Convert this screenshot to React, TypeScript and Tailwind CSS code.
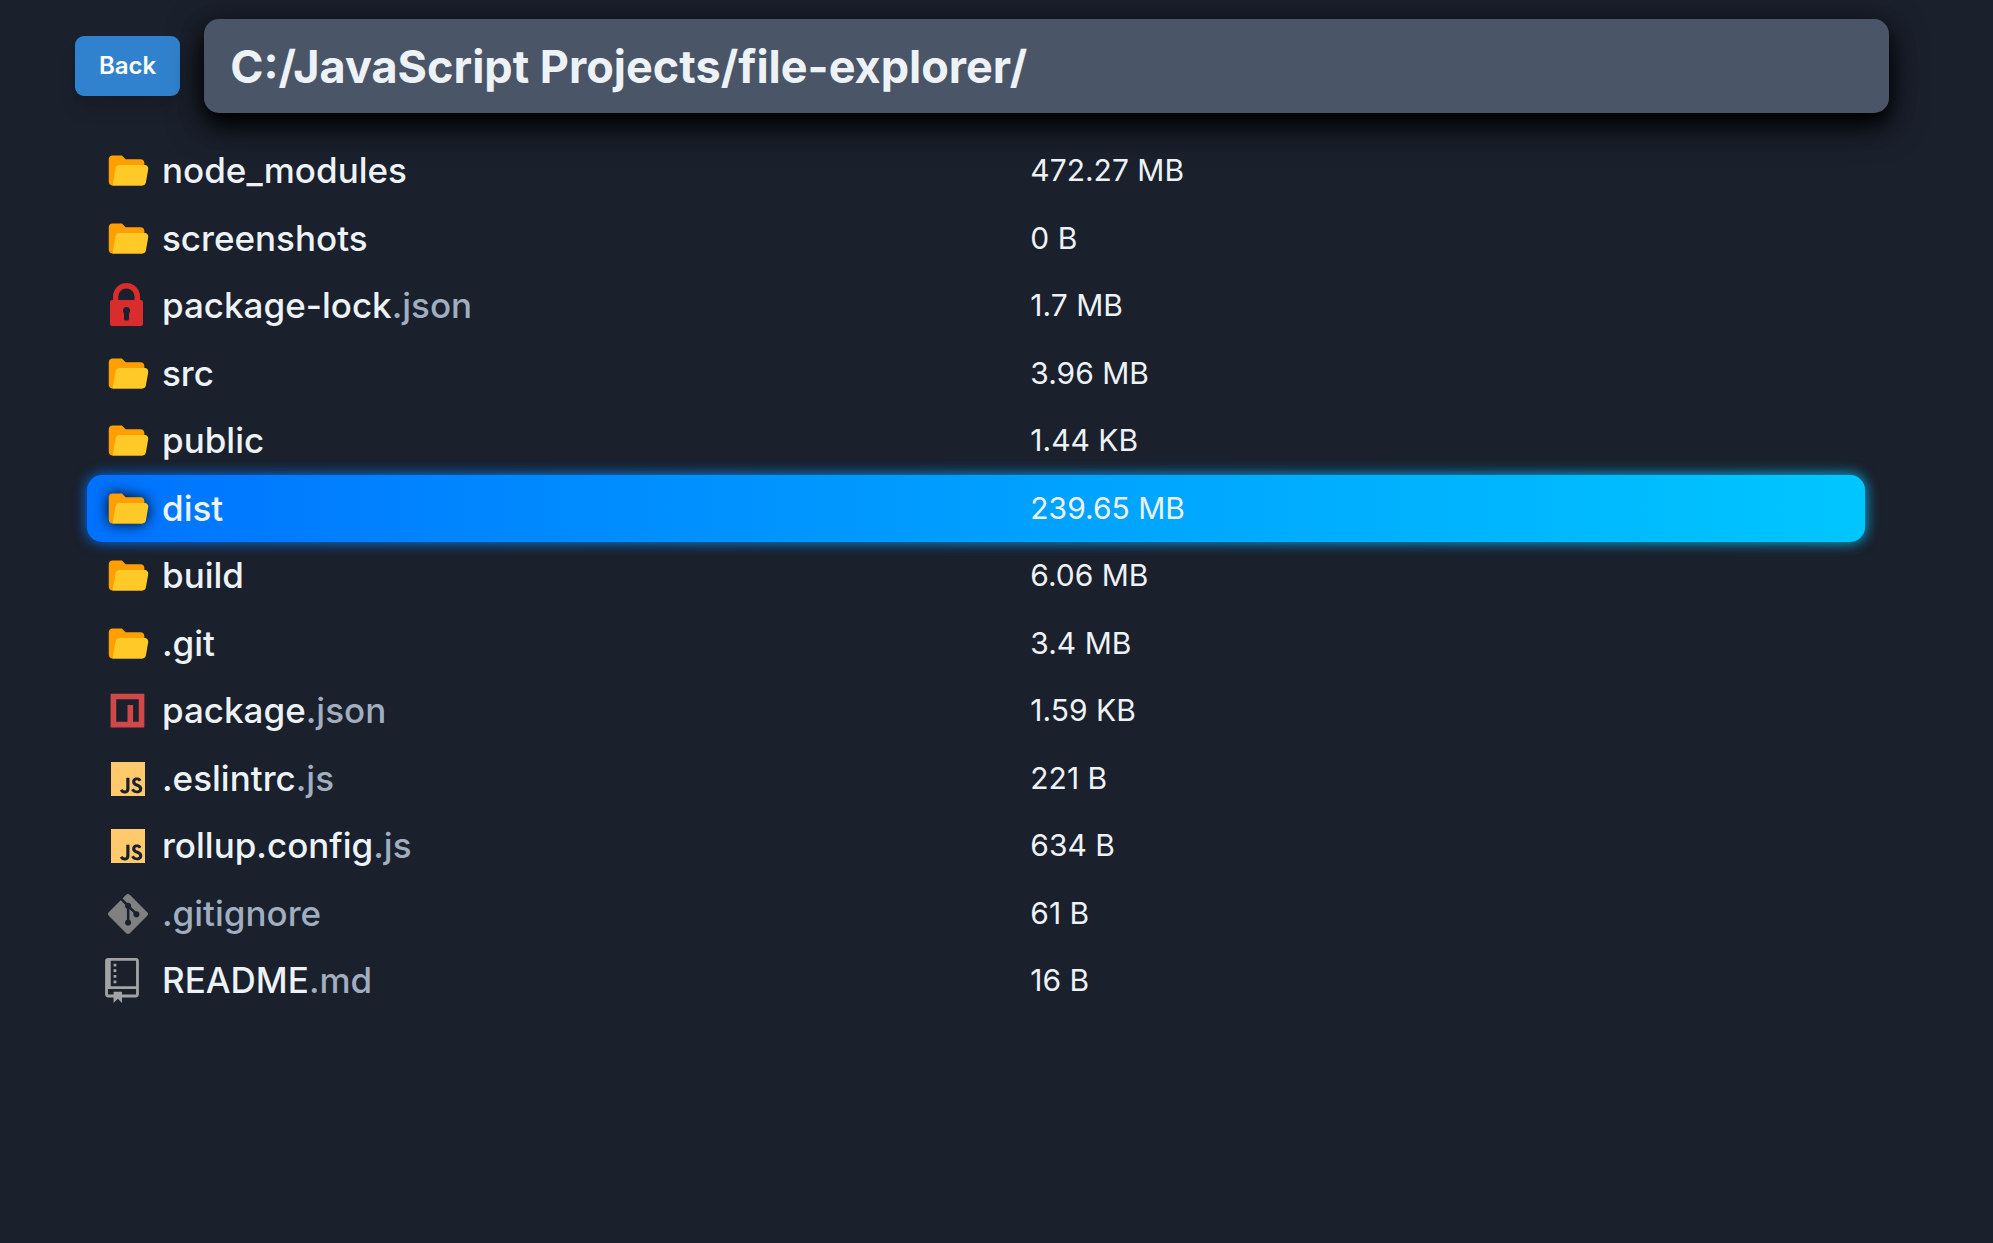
import type { ReactNode } from "react";
import { FcOpenedFolder } from "react-icons/fc";
import { SiGit, SiJavascript } from "react-icons/si";

type IconKind = "folder" | "lock" | "npm" | "js" | "git" | "readme";

type Entry = {
  icon: IconKind;
  name: string;
  ext?: string;
  size: string;
  selected?: boolean;
  muted?: boolean;
};

const entries: Entry[] = [
  { icon: "folder", name: "node_modules", size: "472.27 MB" },
  { icon: "folder", name: "screenshots", size: "0 B" },
  { icon: "lock", name: "package-lock", ext: ".json", size: "1.7 MB" },
  { icon: "folder", name: "src", size: "3.96 MB" },
  { icon: "folder", name: "public", size: "1.44 KB" },
  { icon: "folder", name: "dist", size: "239.65 MB", selected: true },
  { icon: "folder", name: "build", size: "6.06 MB" },
  { icon: "folder", name: ".git", size: "3.4 MB" },
  { icon: "npm", name: "package", ext: ".json", size: "1.59 KB" },
  { icon: "js", name: ".eslintrc", ext: ".js", size: "221 B" },
  { icon: "js", name: "rollup.config", ext: ".js", size: "634 B" },
  { icon: "git", name: ".gitignore", size: "61 B", muted: true },
  { icon: "readme", name: "README", ext: ".md", size: "16 B" },
];

function LockIcon() {
  return (
    <svg viewBox="-5 0 45 45" className="size-[45px]" aria-hidden="true">
      <path
        fill="#d92c2c"
        fillRule="evenodd"
        d="M3 17V13.5a13.5 13.5 0 0 1 27 0V17h1a2 2 0 0 1 2 2V41a2 2 0 0 1-2 2H2a2 2 0 0 1-2-2V19a2 2 0 0 1 2-2ZM8.300 17h16.200V13.500a8.100 8.100 0 0 0-16.200 0ZM16.500 24a3.700 3.700 0 0 0-2.500 6.400V36a1.500 1.500 0 0 0 1.500 1.500h2A1.500 1.500 0 0 0 19 36V30.400A3.700 3.700 0 0 0 16.500 24Z"
      />
    </svg>
  );
}

function NpmIcon() {
  return (
    <svg viewBox="0 0 24 24" className="size-[45px]" aria-hidden="true">
      <path fill="#d14848" d="M3 3H21V21H3V3M6 6V18H12V9H15V18H18V6H6Z" />
    </svg>
  );
}

function ReadmeIcon() {
  return (
    <svg viewBox="0 0 12 16" className="h-[45px] w-[34px]" aria-hidden="true">
      <path
        fill="#a3a3a3"
        fillRule="evenodd"
        d="M4 9H3V8h1v1zm0-3H3v1h1V6zm0-2H3v1h1V4zm0-2H3v1h1V2zm8-1v12c0 .55-.45 1-1 1H6v2l-1.5-1.5L3 16v-2H1c-.55 0-1-.45-1-1V1c0-.55.45-1 1-1h10c.55 0 1 .45 1 1zm-1 10H1v2h2v-1h3v1h5v-2zm0-10H2v9h9V1z"
      />
    </svg>
  );
}

const icons: Record<IconKind, ReactNode> = {
  folder: <FcOpenedFolder className="size-[45px]" aria-hidden="true" />,
  lock: <LockIcon />,
  npm: <NpmIcon />,
  js: <SiJavascript className="mx-auto size-[34px] text-[#ffca6b]" aria-hidden="true" />,
  git: <SiGit className="mx-auto size-10 text-[#808080]" aria-hidden="true" />,
  readme: <ReadmeIcon />,
};

const selectedRow =
  "bg-linear-to-r from-[#0072ff] to-[#00c6ff] before:absolute before:inset-0 before:-z-10 before:rounded-[15px] before:bg-linear-to-r before:from-[#0072ff] before:to-[#00c6ff] before:blur-[7px]";

function EntryRow({ entry }: { entry: Entry }) {
  return (
    <tr
      aria-selected={entry.selected ?? false}
      className={`relative grid grid-cols-[53fr_47fr] items-start rounded-[15px] py-[11px] odd:h-[68px] even:h-[67px] ${entry.selected ? selectedRow : ""}`}
    >
      <td className="flex items-center gap-3 pl-[18px] text-[35px] leading-[45px] font-medium">
        <span
          className={`flex h-[45px] w-[45px] shrink-0 items-center ${entry.selected ? "drop-shadow-[0_0_7px_#000000]" : ""}`}
        >
          {icons[entry.icon]}
        </span>
        <span className={entry.muted ? "text-[#a0aec0]" : ""}>
          {entry.name}
          {entry.ext && <span className="text-[#a0aec0]">{entry.ext}</span>}
        </span>
      </td>
      <td className="pl-px text-3xl leading-[45px]">{entry.size}</td>
    </tr>
  );
}

export default function App() {
  return (
    <div className="min-h-screen bg-[#1a202c] pt-[19px] font-['Inter',sans-serif] text-[#edf2f7]">
      <header className="flex items-center gap-6 pr-[104px] pl-[75px]">
        <button
          type="button"
          className="h-[60px] rounded-[9px] bg-[#3182ce] px-6 text-2xl font-semibold text-white shadow-[0_15px_22px_-4px_rgba(0,0,0,0.1),0_6px_9px_-3px_rgba(0,0,0,0.05)]"
        >
          Back
        </button>
        <h1 className="flex-1 rounded-[15px] bg-[#4a5568] px-[26px] pt-[18px] pb-4 text-[45px] leading-[60px] font-bold shadow-[0_11px_22px_#000000,0_10px_36px_rgba(0,0,0,0.5)]">
          C:/JavaScript Projects/file-explorer/
        </h1>
      </header>
      <main className="relative z-0 mt-6 pr-32 pl-[87px]">
        <table className="block" aria-label="Files">
          <tbody className="block">
            {entries.map((entry) => (
              <EntryRow key={entry.name} entry={entry} />
            ))}
          </tbody>
        </table>
      </main>
    </div>
  );
}
